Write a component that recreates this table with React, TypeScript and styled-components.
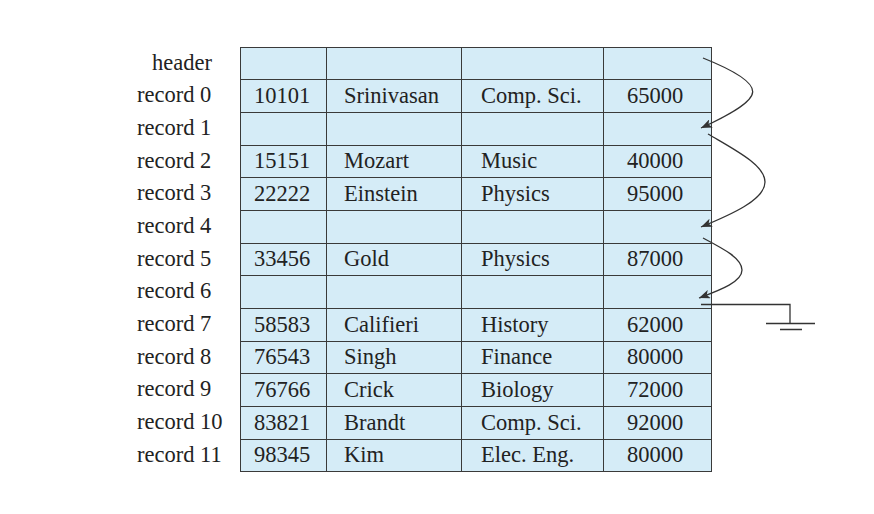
import React from 'react';
import styled, { createGlobalStyle } from 'styled-components';

const GlobalStyle = createGlobalStyle`
  html, body {
    margin: 0;
    padding: 0;
    background: #fff;
  }
  body {
    font-family: 'Liberation Serif', 'Times New Roman', serif;
    color: #222;
  }
`;

type Rec = { id: string; name: string; dept: string; salary: string } | null;

const records: Rec[] = [
  { id: '10101', name: 'Srinivasan', dept: 'Comp. Sci.', salary: '65000' },
  null,
  { id: '15151', name: 'Mozart', dept: 'Music', salary: '40000' },
  { id: '22222', name: 'Einstein', dept: 'Physics', salary: '95000' },
  null,
  { id: '33456', name: 'Gold', dept: 'Physics', salary: '87000' },
  null,
  { id: '58583', name: 'Califieri', dept: 'History', salary: '62000' },
  { id: '76543', name: 'Singh', dept: 'Finance', salary: '80000' },
  { id: '76766', name: 'Crick', dept: 'Biology', salary: '72000' },
  { id: '83821', name: 'Brandt', dept: 'Comp. Sci.', salary: '92000' },
  { id: '98345', name: 'Kim', dept: 'Elec. Eng.', salary: '80000' },
];

const App = () => {
  const rows = [{ label: 'header', rec: null as Rec, header: true }].concat(
    records.map((rec, i) => ({ label: `record ${i}`, rec, header: false })),
  );

  return (
    <Page>
      <GlobalStyle />
      <Figure>
        <Labels>
          {rows.map((r) => (
            <Label key={r.label} $header={r.header}>
              {r.label}
            </Label>
          ))}
        </Labels>
        <Table>
          <tbody>
            {rows.map((r) => (
              <Row key={r.label}>
                <Cell $w={86} $pad={13}>{r.rec?.id}</Cell>
                <Cell $w={135} $pad={17}>{r.rec?.name}</Cell>
                <Cell $w={142} $pad={19}>{r.rec?.dept}</Cell>
                <Cell $w={108} $pad={23}>{r.rec?.salary}</Cell>
              </Row>
            ))}
          </tbody>
        </Table>
      </Figure>
      <Links viewBox="0 0 874 514">
        <defs>
          <marker
            id="head"
            viewBox="0 0 10 8"
            refX="10"
            refY="4"
            markerWidth="11"
            markerHeight="9"
            markerUnits="userSpaceOnUse"
            orient="auto"
          >
            <path d="M0,0 L10,4 L0,8 L2.5,4 z" fill="#333" />
          </marker>
        </defs>
        <g fill="none" stroke="#333" strokeWidth="1.3">
          <path
            d="M703,58 C728,68 753,80 752.7,91.7 C752.5,103 725,117 701,128"
            markerEnd="url(#head)"
          />
          <path
            d="M708,134 C735,150 765,165 765,182 C765,200 730,215 701,227"
            markerEnd="url(#head)"
          />
          <path
            d="M703,238 C722,248 742,258 742,270 C742,282 720,290 699,298"
            markerEnd="url(#head)"
          />
          <path d="M701,304.5 H790 V323 M766,323.5 H815 M780,329.5 H802" />
        </g>
      </Links>
    </Page>
  );
};

const Page = styled.div`
  position: relative;
  width: 874px;
  height: 514px;
  overflow: hidden;
`;

const Figure = styled.div`
  display: flex;
  padding: 46.5px 0 0 137px;
`;

const Labels = styled.div`
  display: flex;
  flex-direction: column;
  width: 103px;
`;

const Label = styled.div<{ $header: boolean }>`
  height: 32.7px;
  line-height: 32.7px;
  font-size: 22.5px;
  text-align: ${(p) => (p.$header ? 'right' : 'left')};
  padding-right: ${(p) => (p.$header ? '28px' : '0')};
  white-space: nowrap;
`;

const Table = styled.table`
  border-collapse: collapse;
  border: 1.5px solid #3a3a3a;
  background: #d5ecf7;
  table-layout: fixed;
`;

const Row = styled.tr`
  height: 32.7px;
`;

const Cell = styled.td<{ $w: number; $pad: number }>`
  width: ${(p) => p.$w}px;
  box-sizing: border-box;
  padding: 0 0 0 ${(p) => p.$pad}px;
  border: 1px solid #3a3a3a;
  font-size: 22.5px;
  line-height: 1;
  white-space: nowrap;
  vertical-align: middle;
`;

const Links = styled.svg`
  position: absolute;
  inset: 0;
  width: 874px;
  height: 514px;
  pointer-events: none;
`;

export default App;
